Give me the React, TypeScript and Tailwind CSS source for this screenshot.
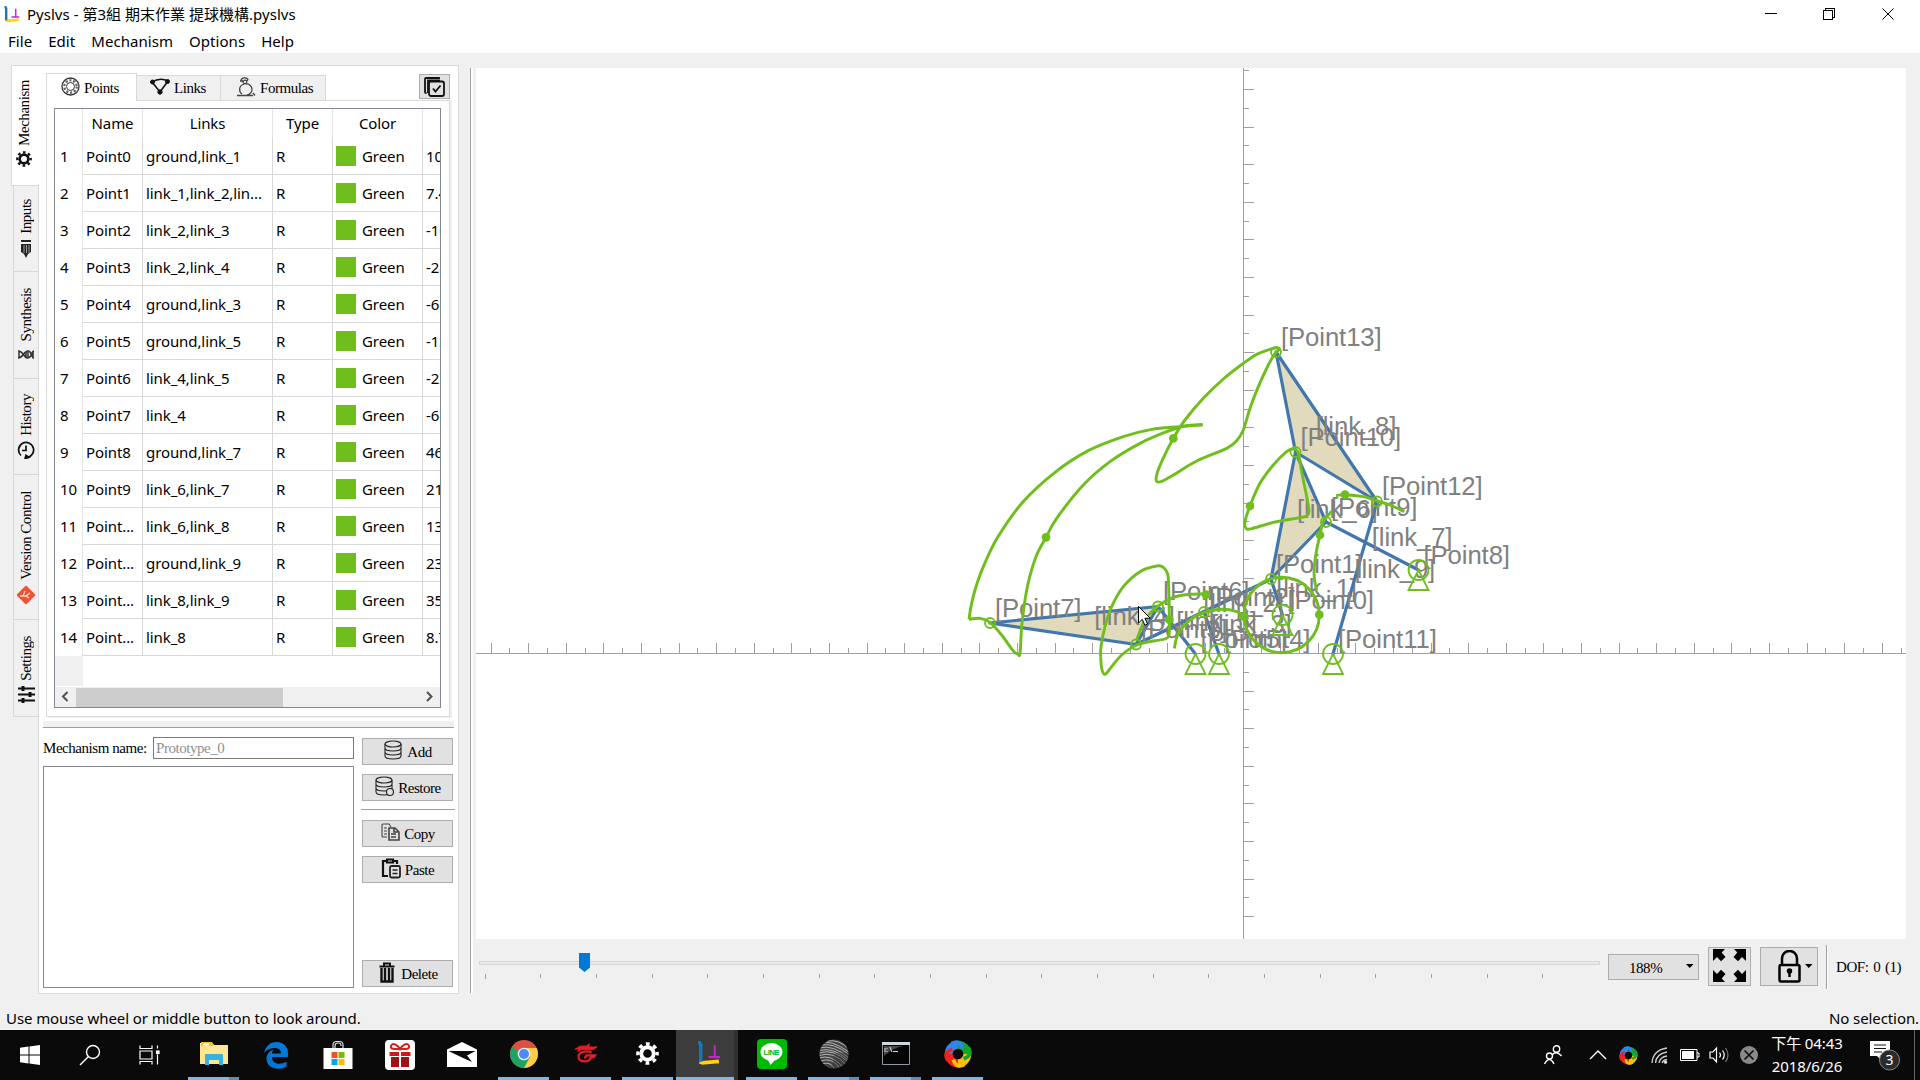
import React from "react";

type Pt = [number, number];

const SERIF = "font-['Liberation_Serif','Noto_Sans_CJK_TC',serif] text-[15px] leading-5 tracking-[-0.45px]";

/* Smooth curve through a list of points */
function spline(pts: Pt[]): string {
  let d = `M${pts[0][0]} ${pts[0][1]}`;
  for (let i = 0; i < pts.length - 1; i++) {
    const p0 = pts[Math.max(0, i - 1)];
    const p1 = pts[i];
    const p2 = pts[i + 1];
    const p3 = pts[Math.min(pts.length - 1, i + 2)];
    d += ` C${p1[0] + (p2[0] - p0[0]) / 6} ${p1[1] + (p2[1] - p0[1]) / 6} ${p2[0] - (p3[0] - p1[0]) / 6} ${p2[1] - (p3[1] - p1[1]) / 6} ${p2[0]} ${p2[1]}`;
  }
  return d;
}

const P: Pt[] = [
  [1282.5, 615], [1271, 579], [1204, 612], [1136, 644.5], [1219, 654], [1195.5, 654], [1158, 606.5],
  [990, 623], [1418.5, 570], [1326, 522], [1295.5, 452], [1333, 654], [1377, 501.5], [1276, 352],
];
const GROUND = [0, 4, 5, 8, 11];
const LINKS: { name: string; pts: number[] }[] = [
  { name: "link_1", pts: [0, 1] },
  { name: "link_2", pts: [1, 2, 3] },
  { name: "link_3", pts: [2, 4] },
  { name: "link_4", pts: [3, 6, 7] },
  { name: "link_5", pts: [5, 6] },
  { name: "link_6", pts: [1, 9, 10] },
  { name: "link_7", pts: [8, 9] },
  { name: "link_8", pts: [10, 12, 13] },
  { name: "link_9", pts: [11, 12] },
];

/* Traced paths, in thirds of a pixel from (940, 320) */
const TRACES: Pt[][] = [
  [[788, 314], [720, 320], [635, 328], [550, 350], [445, 392], [345, 457], [248, 547], [173, 652], [130, 740], [105, 810], [93, 860], [87, 898]],
  [[87, 898], [120, 895], [150, 907], [185, 945], [220, 993], [233, 1002], [240, 1000], [245, 920], [255, 840], [268, 775], [290, 705], [318, 652], [350, 595], [430, 495], [510, 425], [600, 370], [680, 335], [735, 318], [788, 314]],
  [[1012, 83], [990, 88], [950, 103], [910, 130], [850, 177], [790, 235], [735, 300], [700, 355], [665, 425], [650, 465], [650, 484], [665, 484], [700, 465], [770, 423], [860, 385], [890, 362], [910, 330], [930, 265], [955, 200], [985, 135], [1005, 100], [1018, 88], [1012, 83]],
  [[1063, 385], [1040, 395], [1000, 435], [960, 490], [930, 558], [915, 605], [918, 625], [935, 626], [1000, 607], [1080, 593], [1100, 588], [1107, 575], [1103, 545], [1085, 455], [1075, 400], [1063, 385]],
  [[1188, 527], [1215, 524], [1270, 530], [1312, 543], [1350, 555], [1393, 575]],
  [[1176, 573], [1150, 605], [1140, 645], [1130, 690], [1123, 740], [1123, 775], [1130, 812]],
  [[590, 960], [615, 900], [652, 860], [700, 832], [750, 823], [798, 822]],
  [[703, 985], [715, 940], [750, 900], [790, 878], [840, 868], [890, 875], [925, 898]],
  [[482, 1010], [485, 1045], [495, 1063], [515, 1040], [545, 1005], [590, 975], [640, 963], [675, 957], [687, 945], [688, 900], [686, 800], [683, 762], [670, 742], [650, 738], [600, 755], [550, 800], [515, 860], [495, 920], [483, 980], [482, 1010]],
];
const DOTS: Pt[] = [[318, 652], [700, 355], [930, 558], [1215, 524], [1140, 645], [798, 824], [912, 890], [1138, 884], [688, 899]];

function Canvas() {
  const ticksX = Array.from({ length: 76 }, (_, k) => k - 40);
  const ticksY = Array.from({ length: 46 }, (_, k) => k - 31);
  return (
    <svg width="1430" height="871" viewBox="476 68 1430 871" className="block bg-white">
      <g stroke="#a0a0a4" fill="none" shapeRendering="crispEdges">
        <path d="M476 653.5H1906M1243.5 68V939" />
        {ticksX.map((k) => (
          <path key={k} d={`M${Math.floor(1243 + k * 18.8) + 0.5} 653v${k % 2 ? -5 : -10}`} />
        ))}
        {ticksY.map((k) => (
          <path key={k} d={`M1243 ${Math.round(653 + k * 18.8) + 0.5}h${k % 2 ? 6 : 11}`} />
        ))}
      </g>
      <g fontFamily="Liberation Sans, sans-serif" fontSize="25.7" fill="#808080">
        {LINKS.map((l) => {
          const cx = l.pts.reduce((s, i) => s + P[i][0], 0) / l.pts.length;
          const cy = l.pts.reduce((s, i) => s + P[i][1], 0) / l.pts.length;
          return (
            <g key={l.name}>
              <polygon
                points={l.pts.map((i) => P[i].join(",")).join(" ")}
                fill="#e2dabd"
                stroke="#4177ad"
                strokeWidth="3.2"
                strokeLinejoin="round"
              />
              <text x={cx - 0.5} y={cy}>{`[${l.name}]`}</text>
            </g>
          );
        })}
        {P.map((p, i) => (
          <text key={i} x={p[0] + 5} y={p[1] - 6.5}>{`[Point${i}]`}</text>
        ))}
      </g>
      <g stroke="#6fbe1e" fill="none" strokeWidth="1.8">
        {P.map((p, i) =>
          GROUND.includes(i) ? (
            <g key={i}>
              <circle cx={p[0]} cy={p[1]} r="10" />
              <path d={`M${p[0]} ${p[1]}l10 20h-20z`} />
            </g>
          ) : (
            <circle key={i} cx={p[0]} cy={p[1]} r="5" />
          )
        )}
      </g>
      <g transform="translate(940 320) scale(0.33333)" stroke="#6fbe1e" fill="none" strokeWidth="8.8">
        {TRACES.map((t, i) => (
          <path key={i} d={spline(t)} />
        ))}
        <circle cx="1025" cy="885" r="113" />
        {DOTS.map((d, i) => (
          <circle key={i} cx={d[0]} cy={d[1]} r="13" fill="#6fbe1e" stroke="none" />
        ))}
      </g>
      <path d="M1138.5 606.5v16.5l3.8-3.6 2.6 5.8 2.6-1.1-2.6-5.8h5.4z" fill="#fff" stroke="#000" />
    </svg>
  );
}

const ROWS: [string, string, string][] = [
  ["Point0", "ground,link_1", "10.5"],
  ["Point1", "link_1,link_2,lin...", "7.44"],
  ["Point2", "link_2,link_3", "-10"],
  ["Point3", "link_2,link_4", "-28"],
  ["Point4", "ground,link_3", "-6.5"],
  ["Point5", "ground,link_5", "-12"],
  ["Point6", "link_4,link_5", "-22"],
  ["Point7", "link_4", "-67"],
  ["Point8", "ground,link_7", "46.5"],
  ["Point9", "link_6,link_7", "21.9"],
  ["Point...", "link_6,link_8", "13.9"],
  ["Point...", "ground,link_9", "23.8"],
  ["Point...", "link_8,link_9", "35.6"],
  ["Point...", "link_8", "8.77"],
];

function PointTable() {
  return (
    <div className="flex h-[600px] w-[387px] flex-col overflow-hidden border border-[#828790] bg-white">
      <div className="flex h-[29px] w-[480px] shrink-0 items-center text-center">
        <div className="h-full w-7 border-r border-[#e5e5e5]" />
        <div className="flex h-full w-[60px] items-center justify-center border-r border-[#e5e5e5] pb-0.5">Name</div>
        <div className="flex h-full w-[130px] items-center justify-center border-r border-[#e5e5e5] pb-0.5">Links</div>
        <div className="flex h-full w-[60px] items-center justify-center border-r border-[#e5e5e5] pb-0.5">Type</div>
        <div className="flex h-full w-[90px] items-center justify-center border-r border-[#e5e5e5] pb-0.5">Color</div>
      </div>
      {ROWS.map((r, i) => (
        <div key={i} className="flex h-[37px] w-[480px] shrink-0">
          <div className="flex w-7 items-center border-r border-[#e5e5e5] pb-px pl-[5px]">{i + 1}</div>
          <div className="flex w-[60px] items-center border-r border-b border-[#d8d8d8] pl-[3px]">{r[0]}</div>
          <div className="flex w-[130px] items-center border-r border-b border-[#d8d8d8] pl-[3px]">{r[1]}</div>
          <div className="flex w-[60px] items-center border-r border-b border-[#d8d8d8] pl-[3px]">R</div>
          <div className="flex w-[90px] items-center gap-1.5 border-r border-b border-[#d8d8d8] pl-[3px]">
            <span className="size-5 bg-[#6fbe1e]" />
            Green
          </div>
          <div className="flex w-[100px] items-center border-b border-[#d8d8d8] pl-[3px]">{r[2]}</div>
        </div>
      ))}
      <div className="h-[30px] w-7 shrink-0 bg-[#f0f0f0]" />
      <div className="mt-px flex h-5 w-full shrink-0 items-center bg-[#f0f0f0]">
        <svg width="21" height="20" fill="none" stroke="#505050" strokeWidth="2">
          <path d="M12.500 5L8 9.500l4.500 4.500" />
        </svg>
        <div className="h-[19px] w-[207px] bg-[#cdcdcd]" />
        <div className="flex-1" />
        <svg width="21" height="20" fill="none" stroke="#505050" strokeWidth="2">
          <path d="M8 5l4.500 4.500L8 14" />
        </svg>
      </div>
    </div>
  );
}

const Gear = ({ size, color }: { size: number; color: string }) => (
  <svg width={size} height={size} viewBox="0 0 24 24" fill="none" stroke={color}>
    <circle cx="12" cy="12" r="6.500" strokeWidth="4" />
    <circle cx="12" cy="12" r="10" strokeWidth="3.600" strokeDasharray="3.900 3.954" strokeDashoffset="1.950" />
  </svg>
);

const PyslvsLogo = ({ size }: { size: number }) => (
  <svg width={size} height={size} viewBox="0 0 24 24" fill="none">
    <path d="M12 15.500h11M18 4v11" stroke="#c026c8" strokeWidth="2" />
    <path d="M5 22V21l17-1.500" stroke="#ffd400" strokeWidth="3.600" />
    <path d="M4.500 20V2M2 1.800h3" stroke="#1277bd" strokeWidth="3.400" />
  </svg>
);

function SideTab({ label, h, pad, gap, active, children }: {
  label: string; h: string; pad: string; gap: string; active?: boolean; children: React.ReactNode;
}) {
  return (
    <div
      className={`flex flex-col items-center border border-[#d9d9d9] ${h} ${pad} ${gap} ${
        active ? "relative -mr-px w-7 border-r-0 bg-white" : "ml-0.5 w-[25px] border-t-0 border-r-0 bg-[#f0f0f0]"
      }`}
    >
      <span className={`${SERIF} mr-px rotate-180 whitespace-nowrap [writing-mode:vertical-rl]`}>{label}</span>
      {children}
    </div>
  );
}

function SideTabs() {
  return (
    <div className="flex w-[27px] shrink-0 flex-col">
      <SideTab label="Mechanism" h="h-[121px]" pad="pt-[14px] pr-[3px]" gap="gap-[5px]" active>
        <Gear size={16} color="#111" />
      </SideTab>
      <SideTab label="Inputs" h="h-[86px]" pad="pt-[13px]" gap="gap-[5px]">
        <svg width="12" height="20" viewBox="0 0 12 20" className="shrink-0">
          <path d="M1 1h10v2H1zM1 5h10v8l-3 2H4l-3-2zM4 15h4l-2 4z" fill="#222" />
          <path d="M4 6v8M6.500 6v8M9 6v8" stroke="#aaa" strokeWidth=".9" />
        </svg>
      </SideTab>
      <SideTab label="Synthesis" h="h-[107px]" pad="pt-4" gap="gap-[9px]">
        <svg width="16" height="9" viewBox="0 0 16 9" fill="none" stroke="#333" strokeWidth="1.500" className="shrink-0">
          <path d="M0 1c6 0 5 7 10 7 4 0 3-7 6-7M0 8c6 0 5-7 10-7 4 0 3 7 6 7M1 1v7M8 2v5M10 2v5M15 1v7" />
        </svg>
      </SideTab>
      <SideTab label="History" h="h-24" pad="pt-[15px]" gap="gap-[5px]">
        <svg width="18" height="18" viewBox="0 0 18 18" fill="none" stroke="#111" strokeWidth="1.700" className="shrink-0">
          <path d="M9 16.500A7.500 7.500 0 1 0 4 14.500M8 17.800l4-1.500-3-2zM9 4.500v5H5" />
        </svg>
      </SideTab>
      <SideTab label="Version Control" h="h-[145px]" pad="pt-4" gap="gap-[5px]">
        <svg width="20" height="20" viewBox="0 0 20 20" className="shrink-0">
          <rect x="3.200" y="3.200" width="13.600" height="13.600" rx="1" transform="rotate(45 10 10)" fill="#f05133" />
          <path d="M4 11h6l4-3M10 11l3 2M7 11l2-5" stroke="#fbd9d1" strokeWidth="1.300" fill="none" />
        </svg>
      </SideTab>
      <SideTab label="Settings" h="h-[97px]" pad="pt-4" gap="gap-[5px]">
        <svg width="17" height="17" viewBox="0 0 17 17" stroke="#111" strokeWidth="2" className="shrink-0">
          <path d="M0 2.500h17M0 8.500h17M0 14.500h17" />
          <path d="M5 0v5M12 6v5M5 12v5" strokeWidth="3" />
        </svg>
      </SideTab>
    </div>
  );
}

const Db = () => (
  <>
    <ellipse cx="10" cy="4" rx="8" ry="3" />
    <path d="M2 4v12c0 1.700 3.600 3 8 3s8-1.300 8-3V4M2 8c0 1.700 3.600 3 8 3s8-1.300 8-3M2 12c0 1.700 3.600 3 8 3s8-1.300 8-3" />
  </>
);

function SideButton({ label, mt = "", children }: { label: string; mt?: string; children: React.ReactNode }) {
  return (
    <div className={`flex h-[27px] w-[91px] shrink-0 items-center justify-center gap-1 border border-[#adadad] bg-[#e1e1e1] pb-0.5 ${mt}`}>
      <svg width="20" height="21" viewBox="0 0 20 21" fill="none" stroke="#222" strokeWidth="1.100">
        {children}
      </svg>
      <span className={`${SERIF} pt-0.5`}>{label}</span>
    </div>
  );
}

function LeftPanel() {
  return (
    <div className="flex h-[929px] w-[421px] shrink-0 flex-col border border-[#d9d9d9] bg-white">
      <div className="flex h-[35px] pt-[7px] pl-[7px]">
        <div className={`relative z-10 flex h-7 w-[91px] items-center gap-1 border border-b-0 border-[#d9d9d9] bg-white pb-0.5 pl-[14px] ${SERIF}`}>
          <svg width="19" height="19" viewBox="0 0 19 19" fill="none" stroke="#333">
            <circle cx="9.500" cy="9.500" r="8.500" strokeWidth="1.300" />
            <circle cx="9.500" cy="9.500" r="6.200" strokeWidth="2.300" strokeDasharray="2.200 1.696" stroke="#666" />
            <circle cx="9.500" cy="9.500" r="4" />
          </svg>
          <span className="pt-0.5">Points</span>
        </div>
        <div className={`mt-0.5 flex h-[26px] w-[84px] items-center gap-1 border border-l-0 border-[#d9d9d9] bg-[#f0f0f0] pb-0.5 pl-[13px] ${SERIF}`}>
          <svg width="20" height="18" viewBox="0 0 20 18" fill="#111" stroke="#111">
            <path d="M2 4Q10-1 18 3L10 14z" fill="none" strokeWidth="1.600" />
            <circle cx="2.500" cy="4" r="2" />
            <circle cx="17.500" cy="3.500" r="2" />
            <circle cx="10" cy="14" r="2.200" />
          </svg>
          <span className="pt-0.5">Links</span>
        </div>
        <div className={`mt-0.5 flex h-[26px] w-[105px] items-center gap-1 border border-l-0 border-[#d9d9d9] bg-[#f0f0f0] pb-0.5 pl-4 ${SERIF}`}>
          <svg width="19" height="20" viewBox="0 0 19 20" fill="none" stroke="#444" strokeWidth="1.300">
            <path d="M4 4c0-4 7-4 7-1M3 4h3M11 3l-2 1M9 7a5.500 5.500 0 0 1 1 11M7 7C1 9 2 15 5 17M0 18.500h16M16 16l2 2.500" />
            <circle cx="8" cy="5" r="1.800" />
          </svg>
          <span className="pt-0.5">Formulas</span>
        </div>
        <div className="flex-1" />
        <div className="mt-px mr-2 flex h-[25px] w-[31px] items-center justify-center border border-[#adadad] bg-[#e1e1e1]">
          <svg width="21" height="20" viewBox="0 0 21 20" fill="none" stroke="#111" strokeWidth="1.800">
            <path d="M2.500 16H2a1 1 0 0 1-1-1V2a1 1 0 0 1 1-1h13v1M4 16V3.500h12" />
            <rect x="5" y="4.500" width="15" height="14.500" rx="2" />
            <path d="M9 11.500l2.500 3 5-6" />
          </svg>
        </div>
      </div>
      <div className="-mt-px ml-[7px] h-[617px] w-[404px] shrink-0 border border-[#d9d9d9] pt-[7px] pl-[7px] shadow-[2px_1px_0_#f0f0f0]">
        <PointTable />
      </div>
      <div className="mt-1 ml-1 h-[7px] w-[411px] shrink-0 border-b border-[#a0a0a0] bg-[#f0f0f0]" />
      <div className="flex pt-[9px] pl-1">
        <div className="w-[311px]">
          <div className="flex items-center justify-between">
            <span className={`${SERIF} whitespace-nowrap`}>Mechanism name:</span>
            <div className={`h-[22px] w-[201px] border border-[#7a7a7a] pl-0.5 text-[#909090] ${SERIF}`}>Prototype_0</div>
          </div>
          <div className="mt-[7px] h-[222px] border border-[#828790]" />
        </div>
        <div className="ml-2 flex w-[93px] flex-col pt-px">
          <SideButton label="Add"><Db /></SideButton>
          <SideButton label="Restore" mt="mt-[9px]">
            <Db />
            <circle cx="16" cy="16" r="3.500" fill="#e1e1e1" />
          </SideButton>
          <div className="mt-2 mb-2.5 -ml-px h-px shrink-0 bg-[#a0a0a0]" />
          <SideButton label="Copy">
            <path d="M7 15H3a1 1 0 0 1-1-1V3a1 1 0 0 1 1-1h6l2 3M4 6h3M4 9h3M4 12h3" stroke="#444" />
            <path d="M9 6h6l4 4v8H9zM14 6v4h4M11 12h5M11 15h5" stroke="#444" strokeWidth="1.600" />
          </SideButton>
          <SideButton label="Paste" mt="mt-[9px]">
            <path d="M7 18H2V3h4M12 3h4v3M6 1.500h6v3H6z" strokeWidth="2.200" stroke="#111" />
            <rect x="9" y="8" width="10" height="11.500" rx="1.500" strokeWidth="1.800" />
            <path d="M11.500 12h5M11.500 15.500h5" strokeWidth="1.600" />
          </SideButton>
          <SideButton label="Delete" mt="mt-[77px]">
            <path d="M2.500 4.500h15M7 4V1.500h6V4" strokeWidth="2" stroke="#111" />
            <path d="M4.500 6v13.500h11V6M8 6v13M12 6v13" strokeWidth="2.400" stroke="#111" />
          </SideButton>
        </div>
      </div>
    </div>
  );
}

function BottomBar() {
  return (
    <div className="flex h-[54px] w-[1436px] shrink-0">
      <div className="ml-[3px] flex w-[1124px] shrink-0 flex-col pt-[14px]">
        <div className="grid">
          <div className="col-start-1 row-start-1 mt-2 h-1 w-[1121px] border border-[#d6d6d6] bg-[#e7eaea]" />
          <svg width="12" height="20" className="col-start-1 row-start-1 ml-[100px]">
            <path d="M0 0h11v14.500l-5.500 4.500L0 14.500z" fill="#0078d7" />
          </svg>
        </div>
        <svg width="1120" height="6" className="mt-px" shapeRendering="crispEdges">
          {Array.from({ length: 20 }, (_, i) => (
            <path key={i} d={`M${Math.floor(6 + i * 55.68) + 0.5} 0v${i ? 4 : 5}`} stroke="#a8a594" />
          ))}
        </svg>
      </div>
      <div className={`mt-[15px] ml-[5px] flex h-[26px] w-[91px] items-center border border-[#adadad] bg-[#e1e1e1] pt-0.5 pl-[20px] ${SERIF}`}>
        <span className="w-[57px]">188%</span>
        <svg width="8" height="5" className="mb-1"><path d="M0 0h7.500L3.750 4z" /></svg>
      </div>
      <div className="mt-2 ml-[9px] flex h-[39px] w-[43px] items-center justify-center border border-[#adadad] bg-[#e1e1e1] pr-px pb-0.5">
        <svg width="33" height="33" viewBox="0 0 33 33">
          {["", "translate(33 0) scale(-1 1)", "translate(0 33) scale(1 -1)", "translate(33 33) scale(-1 -1)"].map((t) => (
            <g key={t} transform={t}>
              <path d="M0 0h12L8.700 3.600l3.800 4.400-4.500 4.300-4-4.200L0 12z" />
            </g>
          ))}
        </svg>
      </div>
      <div className="mt-2 ml-[9px] flex h-[39px] w-[58px] items-center border border-[#adadad] bg-[#e1e1e1] pl-[17px]">
        <svg width="23" height="33" viewBox="0 0 23 33" fill="none" stroke="#000" strokeWidth="2.500">
          <path d="M4 15V8.500a7.500 7.500 0 0 1 15 0V15" />
          <rect x="1.500" y="15" width="20" height="16.500" rx="1.500" />
          <path d="M11.500 21v6" />
          <circle cx="11.500" cy="21" r="1.500" />
        </svg>
        <svg width="8" height="5" className="ml-1"><path d="M0 0h7.500L3.750 4z" /></svg>
      </div>
      <div className="mt-1.5 ml-2 h-11 w-0.5 border-r border-l border-l-[#a0a0a0] border-r-white" />
      <span className={`mt-[18px] ml-2 whitespace-nowrap [word-spacing:1.5px] ${SERIF}`}>DOF: 0 (1)</span>
    </div>
  );
}

const Swirl = ({ size }: { size: number }) => (
  <svg width={size} height={size} viewBox="0 0 30 30" fill="none" strokeWidth="8.500">
    <path d="M5 15A10 10 0 0 1 15 5" stroke="#2f86f0" />
    <path d="M15 5A10 10 0 0 1 25 15" stroke="#12a52f" />
    <path d="M25 15A10 10 0 0 1 15 25" stroke="#fdbf07" />
    <path d="M15 25A10 10 0 0 1 5 15" stroke="#f02318" />
    <path d="M8 4Q17 -1 20 9" stroke="#2f86f0" strokeWidth="4" />
    <path d="M26 8Q31 17 21 20" stroke="#12a52f" strokeWidth="4" />
    <path d="M22 26Q13 31 10 21" stroke="#fdbf07" strokeWidth="4" />
    <path d="M4 22Q-1 13 9 10" stroke="#f02318" strokeWidth="4" />
  </svg>
);

function Task({ open, stacked, active, children }: { open?: boolean; stacked?: boolean; active?: boolean; children?: React.ReactNode }) {
  return (
    <div className={`flex h-full w-[62px] shrink-0 flex-col items-center ${active ? "-ml-[3px] mr-[3px] border-r-4 border-[#303030] bg-[#3c3c3c]" : ""}`}>
      <div className={`flex flex-1 items-center justify-center ${active ? "pl-1.5" : "pr-px"}`}>{children}</div>
      {open && (
        <div className={`flex h-[3px] bg-[#76b9ed] ${active ? "w-full" : "-ml-0.5 w-[51px]"}`}>
          {stacked && <div className="ml-auto w-2.5 bg-[#5f8fb9]" />}
        </div>
      )}
    </div>
  );
}

function Taskbar() {
  return (
    <div className="flex h-[50px] w-full shrink-0 bg-[#0a0a0a] text-white">
      <div className="flex w-[60px] items-center justify-center">
        <svg width="20" height="20" viewBox="0 0 20 20" fill="#fff">
          <path d="M0 2.800L8.500 1.600V9.400H0zM9.500 1.400L20 0v9.400H9.500zM0 10.500h8.500v7.900L0 17.200zM9.500 10.500H20V20L9.500 18.500z" />
        </svg>
      </div>
      <div className="flex w-[60px] items-center justify-center">
        <svg width="22" height="22" fill="none" stroke="#fff" strokeWidth="1.400">
          <circle cx="14" cy="8" r="6.500" />
          <path d="M9.500 12.500L1 21" />
        </svg>
      </div>
      <div className="flex w-[63px] items-center justify-center pr-[3px]">
        <svg width="22" height="20" fill="none" stroke="#fff" strokeWidth="1.200">
          <path d="M1 .5v3h12v-3M1 6h12v8H1zM1 19.500v-3h12v3M18.500.5v3M18.500 9.500v10" />
          <rect x="17.500" y="6" width="2.500" height="2.500" fill="#fff" />
        </svg>
      </div>
      <Task open stacked>
        <svg width="28" height="24" viewBox="0 0 28 24">
          <path d="M0 1h12l2 2h14v19H0z" fill="#ffe694" />
          <path d="M1 0h11l2 3-2 1H1z" fill="#f8c21c" />
          <path d="M3 1.500h6v2H3z" fill="#fff" />
          <path d="M5 23V13q0-1 1-1h16q1 0 1 1v10h-4v-5H9v5z" fill="#35b3e7" />
        </svg>
      </Task>
      <Task>
        <svg width="26" height="28" viewBox="0 0 26 28">
          <path d="M1 12C3 4 8 1 13.500 1 21 1 25 6 25 12v4H9c0 8 9 8 14.500 4.500v5C15 30 4 27.500 3.500 18 3.300 12 8 9.500 11 8.500 9.500 10 9 11 9 12.500h9C18 5 6 5.500 1 12z" fill="#0078d7" />
        </svg>
      </Task>
      <Task>
        <svg width="30" height="30" viewBox="0 0 30 30">
          <path d="M10 9V5q0-3.500 3.500-3.500h3Q20 1.500 20 5v4M12 9V6q0-3 3-3h1q2 0 2 3" fill="none" stroke="#ddd" strokeWidth="1.200" />
          <path d="M.500 8h29v21H.500z" fill="#fff" />
          <path d="M8.500 12h6v6h-6z" fill="#f25022" />
          <path d="M15.500 12h6v6h-6z" fill="#7fba00" />
          <path d="M8.500 19h6v6h-6z" fill="#00a4ef" />
          <path d="M15.500 19h6v6h-6z" fill="#ffb900" />
        </svg>
      </Task>
      <Task>
        <svg width="30" height="30" viewBox="0 0 30 30">
          <rect width="30" height="30" rx="4" fill="#fff" />
          <path d="M15 9C11 9 5 10 6 6s7-1 9 3c2-4 8-7 9-3s-5 3-9 3z" fill="none" stroke="#d92020" strokeWidth="2" />
          <path d="M4.500 12h9.500v4H4.500zM16 12h9.500v4H16z" fill="#cc1a1a" />
          <path d="M6 17h8v10H6zM16 17h8v10h-8z" fill="#a31212" />
        </svg>
      </Task>
      <Task>
        <svg width="30" height="26" viewBox="0 0 30 26">
          <path d="M0 7.500L15 0l15 7.500V25H0z" fill="#fff" />
          <path d="M1.500 9h27l-8.500 4.500 5 6.500-11-5z" fill="#0a0a0a" />
        </svg>
      </Task>
      <Task open>
        <svg width="28" height="28" viewBox="0 0 28 28">
          <circle cx="14" cy="14" r="14" fill="#dd5144" />
          <path d="M14 14L1.900 7A14 14 0 0 0 14 28l6-10z" fill="#1da462" />
          <path d="M14 8h12.600A14 14 0 0 1 14 28l6-11z" fill="#ffcd46" />
          <circle cx="14" cy="14" r="6.300" fill="#f1f1f1" />
          <circle cx="14" cy="14" r="5" fill="#4c8bf5" />
        </svg>
      </Task>
      <Task open>
        <svg width="24" height="21" viewBox="0 0 26 22" fill="none" stroke="#e01f26">
          <path d="M1 6.500Q6 1.500 13 3L17 .5 16 3.500q6 1 9 0-3 4.500-9 3.500Q8 5.500 4 9l1-3z" strokeWidth=".8" fill="#e01f26" />
          <path d="M19 9.500Q8 7 5 13q-1 6.500 6 6.500 6 0 7-4 4 0 5-2.500h-8q-3 0-3 3.500" strokeWidth="2.400" />
        </svg>
      </Task>
      <Task open><Gear size={23} color="#fff" /></Task>
      <Task open active><PyslvsLogo size={25} /></Task>
      <Task open>
        <div className="grid size-[30px] place-items-center rounded bg-[#00b900]">
          <svg width="23" height="22" viewBox="0 0 23 22">
            <ellipse cx="11.500" cy="9" rx="11" ry="9" fill="#fff" />
            <path d="M8 17h7l-4.500 5z" fill="#fff" />
            <text x="11.500" y="11.800" fontSize="7.500" fontWeight="bold" textAnchor="middle" fontFamily="Liberation Sans, sans-serif" fill="#00b900" textLength="16">LINE</text>
          </svg>
        </div>
      </Task>
      <Task open stacked>
        <svg width="30" height="30" viewBox="0 0 30 30">
          <defs><clipPath id="globe"><circle cx="15" cy="15" r="14.500" /></clipPath></defs>
          <g clipPath="url(#globe)">
            <path d="M0 0h30v30H0z" fill="#444" />
            <path d="M0 4q12-4 30 9M0 6.500q14-4 30 9M0 9q14-4 30 10M0 11.500q14-4 30 10M0 14q14-5 29 9M0 16.500q14-5 27 9M0 19q12-4 23 8M2 22q10-4 18 6M3 25q8-3 12 4M8 2q12-2 22 8" fill="none" stroke="#b5b5b5" strokeWidth="1" />
            <path d="M16 14l14 0v16H12z" fill="#333" opacity=".45" />
          </g>
        </svg>
      </Task>
      <Task open stacked>
        <svg width="28" height="24" viewBox="0 0 28 24">
          <path d="M.5 1.500h27v21H.5z" fill="#050505" stroke="#8f98a3" />
          <path d="M0 0h28v3H0z" fill="#cfd8df" />
          <path d="M2 4h20Q12 5 2 14z" fill="#4a4a4a" />
          <path d="M3 6v4M5 6v1M5 9v1M8 5l2 5M11 9.500h5" stroke="#ddd" />
        </svg>
      </Task>
      <Task open><Swirl size={28} /></Task>
      <div className="flex-1" />
      <div className="flex items-center">
        <svg width="20" height="20" viewBox="0 0 20 20" fill="none" stroke="#fff" strokeWidth="1.400">
          <circle cx="13.500" cy="4" r="3.200" />
          <path d="M9 10q4-5 9.500 1" />
          <circle cx="6.500" cy="11" r="3" />
          <path d="M1.500 19q5-9 9.500 0" />
        </svg>
        <svg width="18" height="10" fill="none" stroke="#fff" strokeWidth="1.400" className="ml-[26px]">
          <path d="M1 9l8-8 8 8" />
        </svg>
        <div className="ml-3"><Swirl size={19} /></div>
        <svg width="17" height="17" viewBox="0 0 17 17" fill="none" stroke="#ccc" strokeWidth="1.300" className="ml-[13px]">
          <path d="M1 16Q2 3 16 1M4.500 16Q5 7 16 5M8 16q1-6 8-7M11 16q1-3 5-3.500" />
          <circle cx="14.500" cy="15" r="1.200" fill="#fff" />
        </svg>
        <svg width="20" height="12" viewBox="0 0 20 12" className="ml-3">
          <path d="M.500.500h16.500v11H.5zM17 4h2v4h-2" fill="none" stroke="#fff" />
          <path d="M2 2h12v8H2z" fill="#fff" />
        </svg>
        <svg width="21" height="18" viewBox="0 0 21 18" fill="none" stroke="#fff" strokeWidth="1.200" className="ml-[9px]">
          <path d="M1 6h3l3.500-4v14L4 12H1zM10.500 6.500q2 2.500 0 5M13.500 4.500q3.500 4.500 0 9" />
          <path d="M16.500 2q5 7 0 14" stroke="#777" />
        </svg>
        <svg width="18" height="18" className="ml-2.5">
          <circle cx="9" cy="9" r="9" fill="#8a8a8a" />
          <path d="M4.500 4.500l9 9M13.500 4.500l-9 9" stroke="#111" strokeWidth="1.700" />
        </svg>
        <div className="mr-px ml-[13px] flex w-[76px] flex-col items-center whitespace-nowrap font-['Noto_Sans','Noto_Sans_CJK_TC',sans-serif] text-[15px] leading-[23px] tracking-[-0.1px]">
          <span className="-ml-1">下午 04:43</span>
          <span className="-ml-1">2018/6/26</span>
        </div>
        <svg width="31" height="31" viewBox="0 0 31 31" className="ml-[22px]">
          <path d="M0 1h20v15h-9v4l-4-4H0z" fill="#fff" />
          <path d="M4 5h12M4 8.500h12M4 12h8" stroke="#111" />
          <circle cx="19.500" cy="20" r="10" fill="#2b2b2b" stroke="#888" />
          <text x="19.500" y="25" fontSize="14" fill="#fff" textAnchor="middle" fontFamily="Noto Sans, sans-serif">3</text>
        </svg>
        <div className="mr-[5px] ml-[13px] h-[50px] w-px bg-[#666]" />
      </div>
    </div>
  );
}

export default function App() {
  return (
    <div className="flex h-[1080px] w-[1920px] flex-col overflow-hidden bg-[#f0f0f0] font-['Noto_Sans','Noto_Sans_CJK_TC',sans-serif] text-[15px] leading-5 tracking-[-0.09px] text-black">
      <div className="flex h-7 shrink-0 items-center bg-white pl-[3px]">
        <PyslvsLogo size={17} />
        <span className="ml-[7px] tracking-[0.02px]">Pyslvs - 第3組 期末作業 提球機構.pyslvs</span>
        <div className="flex-1" />
        <svg width="150" height="28" fill="none" stroke="#000" className="mr-1.5" shapeRendering="crispEdges">
          <path d="M1 13.500h12M59.500 10.500h9v9h-9zM61.500 10.500v-2h9v9h-2" />
          <path d="M118.500 8.500l11 11M129.500 8.500l-11 11" shapeRendering="auto" />
        </svg>
      </div>
      <div className="flex h-[25px] shrink-0 gap-4 bg-white pt-[3px] pl-2 tracking-[0.05px]">
        <span>File</span>
        <span>Edit</span>
        <span>Mechanism</span>
        <span>Options</span>
        <span>Help</span>
      </div>
      <div className="flex h-[948px] shrink-0 pt-3 pl-[11px]">
        <SideTabs />
        <LeftPanel />
        <div className="mt-[3px] ml-[11px] h-[925px] w-[3px] shrink-0 border-r-2 border-l border-l-[#a0a0a0] border-r-white" />
        <div className="mt-[3px] ml-[3px] flex flex-col">
          <Canvas />
          <BottomBar />
        </div>
      </div>
      <div className="flex h-[29px] shrink-0 justify-between pt-[7px] pr-px pl-1.5">
        <span>Use mouse wheel or middle button to look around.</span>
        <span>No selection.</span>
      </div>
      <Taskbar />
    </div>
  );
}
